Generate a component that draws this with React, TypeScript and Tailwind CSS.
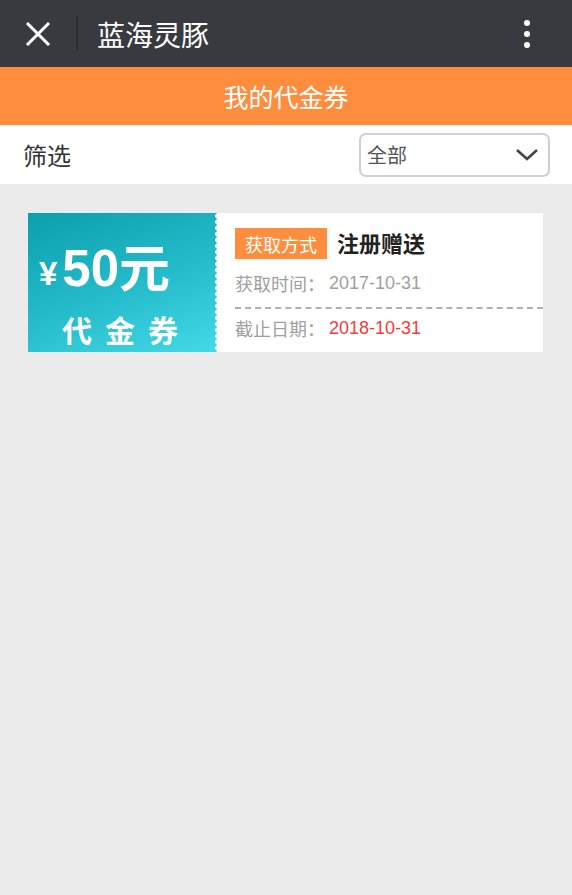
import React from "react";

const cjk = { fontFamily: '"Noto Sans CJK SC", "Noto Sans", sans-serif' };

export default function App() {
  return (
    <div
      className="w-[572px] h-[895px] bg-[#ebebeb] flex flex-col"
      style={{ fontFamily: '"Liberation Sans", "Noto Sans CJK SC", sans-serif' }}
    >
      {/* Top nav */}
      <div className="h-[67px] bg-[#393a3f] flex items-center shrink-0">
        <div className="w-[76px] h-full flex items-center justify-center pr-[1px]">
          <svg width="26" height="24" viewBox="0 0 26 24">
            <path d="M2 1 L24 23 M24 1 L2 23" stroke="#fff" strokeWidth="3" strokeLinecap="butt" />
          </svg>
        </div>
        <div className="w-[2px] h-[35px] bg-[#2c2d31]" />
        <div className="ml-[19px] text-white text-[28px] leading-none flex-1" style={cjk}>
          蓝海灵豚
        </div>
        <div className="w-[40px] mr-[25px] flex flex-col items-center justify-center gap-[5px]">
          <div className="w-[6px] h-[6px] rounded-full bg-white" />
          <div className="w-[6px] h-[6px] rounded-full bg-white" />
          <div className="w-[6px] h-[6px] rounded-full bg-white" />
        </div>
      </div>

      {/* Title bar */}
      <div className="h-[58px] bg-[#ff8d3e] flex items-center justify-center shrink-0">
        <span className="text-white text-[25px] leading-none" style={cjk}>
          我的代金券
        </span>
      </div>

      {/* Filter row */}
      <div className="h-[59px] bg-white flex items-center justify-between pl-[23px] pr-[22px] shrink-0">
        <span className="text-[#333] text-[24px] leading-none" style={cjk}>
          筛选
        </span>
        <div className="w-[191px] h-[44px] border-2 border-[#d0d0d0] rounded-[7px] flex items-center justify-between pl-[6px] pr-[9px]">
          <span className="text-[#555] text-[20px] leading-none" style={cjk}>
            全部
          </span>
          <svg width="24" height="14" viewBox="0 0 24 14">
            <path d="M2 2 L12 11 L22 2" stroke="#444" strokeWidth="2.6" fill="none" />
          </svg>
        </div>
      </div>

      {/* Content */}
      <div className="pt-[29px] px-[28px]">
        <div className="h-[139px] w-[515px] bg-white flex">
          <div className="relative w-[190px] h-full overflow-hidden bg-[linear-gradient(160deg,#0c9fac_0%,#25bccb_55%,#45d9e7_100%)] flex flex-col items-start pl-[11px]">
            <div className="flex items-end mt-[29px] text-white font-bold leading-none">
              <span className="text-[33px] mb-[-1px] mr-[5px]" style={{ fontFamily: '"Liberation Sans", sans-serif' }}>¥</span>
              <span className="text-[51px] leading-[41px]" style={{ fontFamily: '"Liberation Sans", sans-serif' }}>50</span>
              <span className="text-[51px] leading-[47px]" style={cjk}>元</span>
            </div>
            <div className="mt-[25px] ml-[23px] text-white font-bold text-[30px] leading-none tracking-[13px]" style={cjk}>
              代金券
            </div>
            <div className="absolute right-0 top-0 h-full w-[5px] bg-[radial-gradient(circle_at_100%_50%,#ffffff_2.6px,transparent_3.1px)] bg-[length:5px_6px] bg-repeat-y" />
          </div>
          <div className="flex-1 flex flex-col pl-[17px]">
            <div className="flex items-center mt-[15px]">
              <span className="bg-[#ff8d3e] text-white text-[18px] leading-none px-[10px] h-[31px] flex items-center" style={cjk}>
                获取方式
              </span>
              <span className="ml-[10px] mb-[3px] text-[#222] text-[22px] font-bold leading-none" style={cjk}>
                注册赠送
              </span>
            </div>
            <div className="mt-[15px] text-[#a0a0a0] text-[18px] leading-none flex items-center">
              <span style={cjk}>获取时间：</span>
              <span className="text-[18px] ml-[4px]">2017-10-31</span>
            </div>
            <div className="mt-[15px] border-t-2 border-dashed border-[#b0b0b0]" />
            <div className="mt-[10px] text-[#a0a0a0] text-[18px] leading-none flex items-center">
              <span style={cjk}>截止日期：</span>
              <span className="text-[18px] ml-[4px] text-[#f53a3a]">2018-10-31</span>
            </div>
          </div>
        </div>
      </div>
    </div>
  );
}
